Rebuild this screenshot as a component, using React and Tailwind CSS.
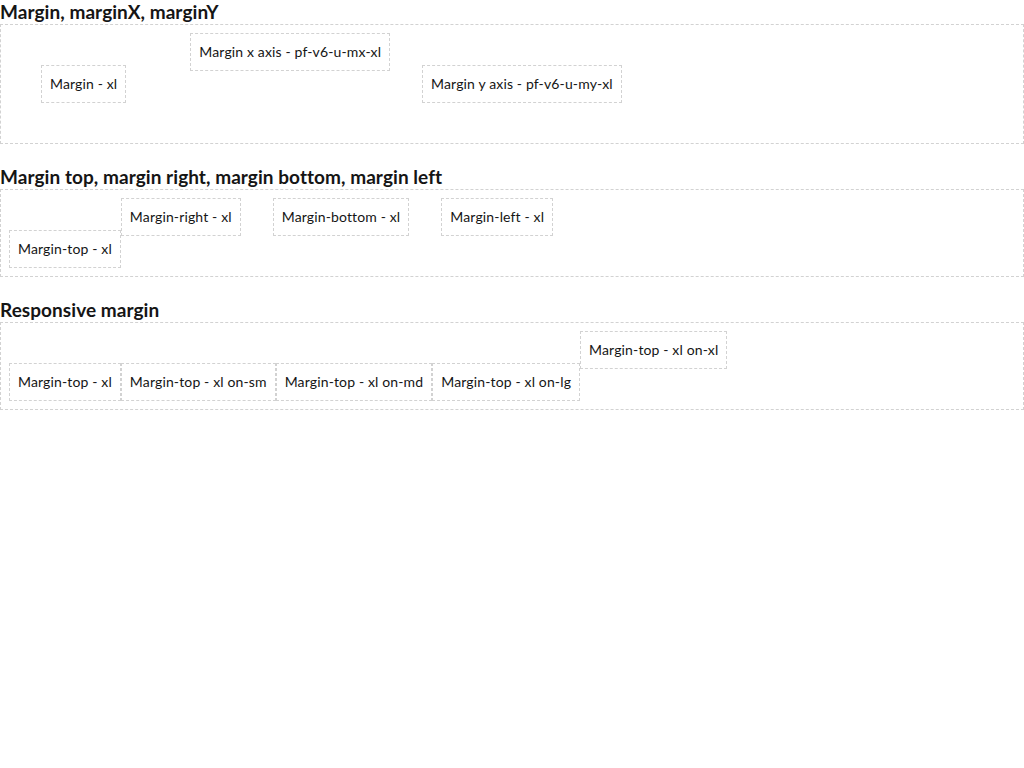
const box =
  "border border-dashed border-[#d2d2d2] px-2 py-2 text-sm leading-5 tracking-[0.01em] text-[#151515] whitespace-nowrap";

function Section({ title, first, children }) {
  return (
    <section className={first ? "" : "mt-[21px]"}>
      <h2 className="text-[19px] font-bold leading-6 tracking-[0.003em] text-[#151515]">
        {title}
      </h2>
      <div className="flex items-start border border-dashed border-[#d2d2d2] p-2">
        {children}
      </div>
    </section>
  );
}

export default function App() {
  return (
    <div className="min-h-[768px] bg-white font-['Lato','Noto_Sans',sans-serif]">
      <Section title="Margin, marginX, marginY" first>
        <div className={`${box} m-8`}>Margin - xl</div>
        <div className={`${box} mx-8`}>Margin x axis - pf-v6-u-mx-xl</div>
        <div className={`${box} my-8`}>Margin y axis - pf-v6-u-my-xl</div>
      </Section>

      <Section title="Margin top, margin right, margin bottom, margin left">
        <div className={`${box} mt-8`}>Margin-top - xl</div>
        <div className={`${box} mr-8`}>Margin-right - xl</div>
        <div className={`${box} mb-8`}>Margin-bottom - xl</div>
        <div className={`${box} ml-8`}>Margin-left - xl</div>
      </Section>

      <Section title="Responsive margin">
        <div className={`${box} mt-8`}>Margin-top - xl</div>
        <div className={`${box} sm:mt-8`}>Margin-top - xl on-sm</div>
        <div className={`${box} md:mt-8`}>Margin-top - xl on-md</div>
        <div className={`${box} lg:mt-8`}>Margin-top - xl on-lg</div>
        <div className={`${box} min-[1200px]:mt-8`}>Margin-top - xl on-xl</div>
      </Section>
    </div>
  );
}
